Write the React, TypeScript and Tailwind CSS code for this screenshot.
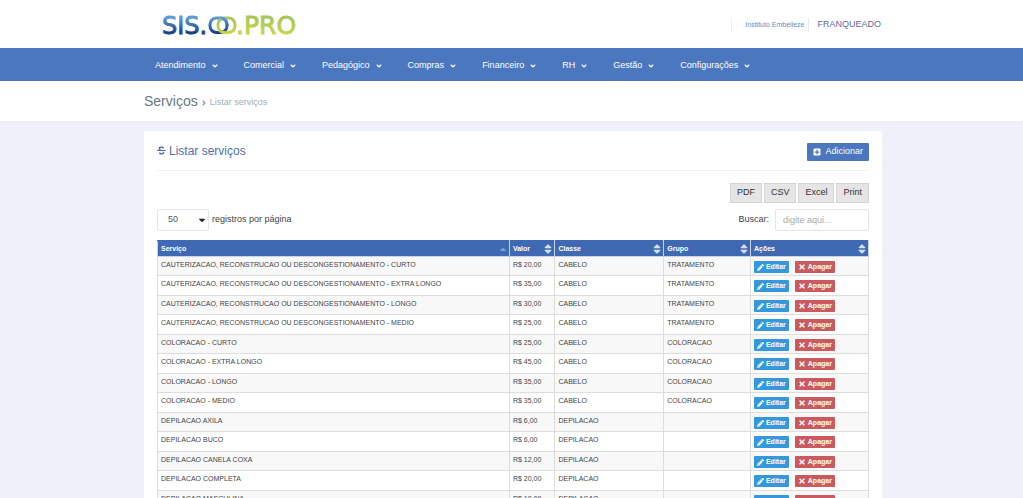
import { useState } from "react";
import {
  FaAngleDown,
  FaAngleRight,
  FaCaretDown,
  FaCaretUp,
  FaPencilAlt,
  FaPlusSquare,
  FaSort,
  FaStrikethrough,
  FaTimes,
} from "react-icons/fa";

type Service = {
  name: string;
  price: string;
  category: string;
  group: string;
};

const menu = [
  "Atendimento",
  "Comercial",
  "Pedagógico",
  "Compras",
  "Financeiro",
  "RH",
  "Gestão",
  "Configurações",
];

const columns = [
  { label: "Serviço", width: "w-[49.5%]" },
  { label: "Valor", width: "w-[6.4%]" },
  { label: "Classe", width: "w-[15.3%]" },
  { label: "Grupo", width: "w-[12.2%]" },
  { label: "Ações", width: "w-[16.6%]" },
];

const services: Service[] = [
  { name: "CAUTERIZACAO, RECONSTRUCAO OU DESCONGESTIONAMENTO - CURTO", price: "R$ 20,00", category: "CABELO", group: "TRATAMENTO" },
  { name: "CAUTERIZACAO, RECONSTRUCAO OU DESCONGESTIONAMENTO - EXTRA LONGO", price: "R$ 35,00", category: "CABELO", group: "TRATAMENTO" },
  { name: "CAUTERIZACAO, RECONSTRUCAO OU DESCONGESTIONAMENTO - LONGO", price: "R$ 30,00", category: "CABELO", group: "TRATAMENTO" },
  { name: "CAUTERIZACAO, RECONSTRUCAO OU DESCONGESTIONAMENTO - MEDIO", price: "R$ 25,00", category: "CABELO", group: "TRATAMENTO" },
  { name: "COLORACAO - CURTO", price: "R$ 25,00", category: "CABELO", group: "COLORACAO" },
  { name: "COLORACAO - EXTRA LONGO", price: "R$ 45,00", category: "CABELO", group: "COLORACAO" },
  { name: "COLORACAO - LONGO", price: "R$ 35,00", category: "CABELO", group: "COLORACAO" },
  { name: "COLORACAO - MEDIO", price: "R$ 35,00", category: "CABELO", group: "COLORACAO" },
  { name: "DEPILACAO AXILA", price: "R$ 6,00", category: "DEPILACAO", group: "" },
  { name: "DEPILACAO BUCO", price: "R$ 6,00", category: "DEPILACAO", group: "" },
  { name: "DEPILACAO CANELA COXA", price: "R$ 12,00", category: "DEPILACAO", group: "" },
  { name: "DEPILACAO COMPLETA", price: "R$ 20,00", category: "DEPILACAO", group: "" },
  { name: "DEPILACAO MASCULINA", price: "R$ 10,00", category: "DEPILACAO", group: "" },
];

function Logo() {
  return (
    <svg width="140" height="32" viewBox="0 0 140 32" role="img" aria-label="SIS.OO.PRO">
      <defs>
        <linearGradient id="blue" x1="0" y1="7" x2="0" y2="26" gradientUnits="userSpaceOnUse">
          <stop offset="0.1" stopColor="#5c9bd3" />
          <stop offset="0.9" stopColor="#173f86" />
        </linearGradient>
        <linearGradient id="green" x1="0" y1="7" x2="0" y2="26" gradientUnits="userSpaceOnUse">
          <stop offset="0.1" stopColor="#a9c65c" />
          <stop offset="0.9" stopColor="#c3d545" />
        </linearGradient>
      </defs>
      <g fontFamily="DejaVu Sans, sans-serif" fontSize="24" strokeWidth="0.9">
        <text x="0" y="25" fill="url(#blue)" stroke="url(#blue)">SIS.</text>
        <text x="74" y="25" fontSize="25" fill="url(#green)" stroke="url(#green)">.PRO</text>
      </g>
      <rect x="48" y="9" width="17" height="14.5" rx="6.5" fill="none" stroke="url(#blue)" strokeWidth="3" />
      <rect x="56" y="9" width="17" height="14.5" rx="6.5" fill="none" stroke="url(#green)" strokeWidth="3" />
      <path d="M58.500 9a6.500 6.500 0 0 1 6.500 6.500v1.500" fill="none" stroke="url(#blue)" strokeWidth="3" />
    </svg>
  );
}

export default function App() {
  const [pageSize, setPageSize] = useState("50");
  const [search, setSearch] = useState("");

  const rows = services.filter((s) => s.name.toLowerCase().includes(search.toLowerCase()));

  return (
    <div className="h-screen overflow-y-auto bg-[#eef1f9] font-['Liberation_Sans',Arial,sans-serif] text-[9px] text-[#444] [scrollbar-width:none]">
      <header className="h-12 bg-white">
        <div className="mx-auto flex h-full max-w-[741px] items-center justify-between pt-[2px] pl-[3px]">
          <a href="#" className="ml-[18px]">
            <Logo />
          </a>
          <div className="flex items-center pr-px text-[#5c6b9c]">
            <span className="h-3 border-l border-[#e7ecf3]" />
            <a href="#" className="pr-1 pl-[13px] text-[7px] text-[#5b8fc7]">
              Instituto Embelleze
            </a>
            <a href="#" className="border-l border-[#e7ecf3] pl-2">
              FRANQUEADO
            </a>
          </div>
        </div>
      </header>

      <nav className="h-[33px] bg-[#4b77be]">
        <ul className="mx-auto flex h-full max-w-[741px] items-center gap-[25px] pt-[2px] pl-[14px] text-white">
          {menu.map((item) => (
            <li key={item}>
              <a href="#" className="flex items-center gap-[5px]">
                {item}
                <FaAngleDown className="size-2" />
              </a>
            </li>
          ))}
        </ul>
      </nav>

      <div className="h-10 bg-white">
        <div className="mx-auto flex h-full max-w-[741px] items-center gap-1 pl-[3px]">
          <h1 className="text-sm text-[#697882]">Serviços</h1>
          <FaAngleRight className="mt-1 h-2 w-1 text-[#8a97a0]" />
          <span className="mt-1 text-[#9eacb4]">Listar serviços</span>
        </div>
      </div>

      <div className="mx-auto mt-[10px] max-w-[741px] pl-[3px]">
        <main className="rounded-xs bg-white px-[13px] pb-4">
          <div className="flex h-10 items-center justify-between border-b border-[#eef1f5]">
            <h2 className="flex items-center gap-[3px] text-xs text-[#4b70ac]">
              <FaStrikethrough className="size-[9px]" />
              Listar serviços
            </h2>
            <button
              type="button"
              className="mt-[2px] flex h-[18px] items-center gap-1 rounded-[1px] bg-[#4b77be] px-[6px] text-white hover:bg-[#3f69ad]"
            >
              <FaPlusSquare className="size-2" />
              Adicionar
            </button>
          </div>

          <div className="mt-3 flex justify-end gap-[2px]">
            {["PDF", "CSV", "Excel", "Print"].map((format) => (
              <button
                key={format}
                type="button"
                className="h-5 border border-[#d3d3d3] bg-[#e5e5e5] px-[6px] text-[#333]"
              >
                {format}
              </button>
            ))}
          </div>

          <div className="mt-[6px] flex items-center justify-between">
            <label className="flex items-center gap-[3px]">
              <span className="relative">
                <select
                  value={pageSize}
                  onChange={(e) => setPageSize(e.target.value)}
                  className="h-[22px] w-[52px] appearance-none rounded-xs border border-[#e5e5e5] bg-white pl-[10px] text-[#555]"
                >
                  <option>10</option>
                  <option>25</option>
                  <option>50</option>
                  <option>100</option>
                </select>
                <FaCaretDown className="pointer-events-none absolute top-[6px] right-[2px] size-[10px] text-[#222]" />
              </span>
              registros por página
            </label>
            <label className="flex items-center gap-[6px]">
              Buscar:
              <input
                type="search"
                value={search}
                onChange={(e) => setSearch(e.target.value)}
                placeholder="digite aqui..."
                className="h-[22px] w-[94px] rounded-xs border border-[#e5e5e5] px-[7px] placeholder:text-[#aaa]"
              />
            </label>
          </div>

          <table className="mt-[9px] w-full table-fixed border-collapse text-[7px] leading-[8px]">
            <thead>
              <tr className="h-4 bg-[#3f6ab3] text-left text-white">
                {columns.map((col, i) => (
                  <th key={col.label} className={`border border-[#c9d3e4] border-t-[#3f6ab3] pr-px pl-[3px] font-bold ${col.width}`}>
                    <span className="flex items-center justify-between">
                      {col.label}
                      {i === 0 ? (
                        <FaCaretUp className="size-[10px] text-[#7f9fd4]" />
                      ) : (
                        <FaSort className="h-3 w-[10px] text-[#d5e0f2]" />
                      )}
                    </span>
                  </th>
                ))}
              </tr>
            </thead>
            <tbody>
              {rows.map((row) => (
                <tr key={row.name} className="h-5 align-top odd:h-[19px] odd:bg-[#f8f8f8]">
                  <td className="border border-[#ddd] px-[3px] pt-1">{row.name}</td>
                  <td className="border border-[#ddd] px-[3px] pt-1">{row.price}</td>
                  <td className="border border-[#ddd] px-[3px] pt-1">{row.category}</td>
                  <td className="border border-[#ddd] px-[3px] pt-1">{row.group}</td>
                  <td className="border border-[#ddd] px-[3px] pt-1">
                    <div className="flex gap-[6px] font-bold text-white">
                      <button type="button" className="flex h-3 items-center gap-[2px] rounded-[1px] bg-[#3598dc] px-[3px]">
                        <FaPencilAlt className="size-[7px]" />
                        Editar
                      </button>
                      <button type="button" className="flex h-3 items-center gap-[2px] rounded-[1px] bg-[#cb5a5e] px-[3px]">
                        <FaTimes className="size-2" />
                        Apagar
                      </button>
                    </div>
                  </td>
                </tr>
              ))}
            </tbody>
          </table>
        </main>
      </div>
    </div>
  );
}
